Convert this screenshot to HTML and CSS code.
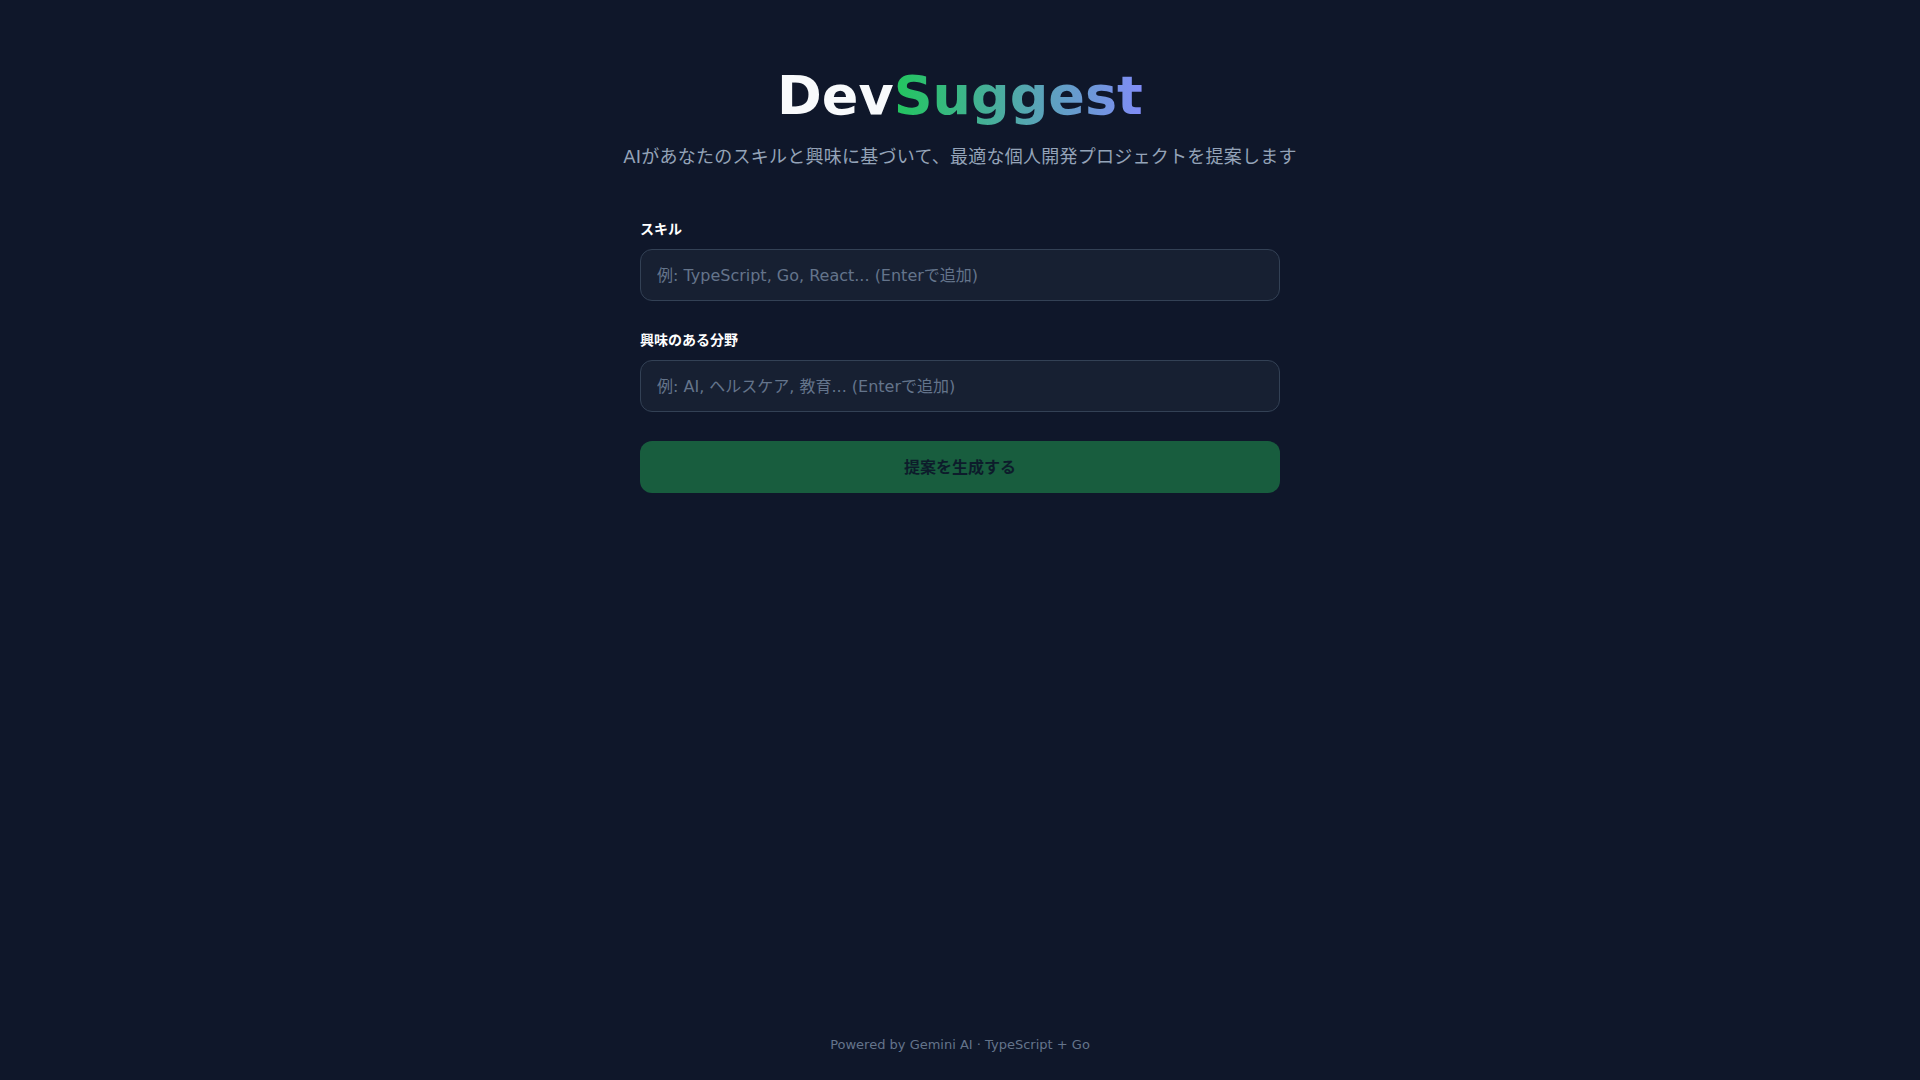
FILE: index.html
```html
<!DOCTYPE html>
<html lang="ja">

<head>
    <meta charset="UTF-8">
    <meta name="viewport" content="width=device-width, initial-scale=1.0">
    <title>DevSuggest</title>
    <link rel="stylesheet" href="styles.css">
</head>

<body>
    <main class="page">
        <header class="hero">
            <h1 class="logo">Dev<span class="logo-accent">Suggest</span></h1>
            <p class="lead">AIがあなたのスキルと興味に基づいて、最適な個人開発プロジェクトを提案します</p>
        </header>

        <form class="panel">
            <div class="field">
                <label for="skills">スキル</label>
                <input type="text" id="skills" placeholder="例: TypeScript, Go, React... (Enterで追加)">
            </div>
            <div class="field">
                <label for="interests">興味のある分野</label>
                <input type="text" id="interests" placeholder="例: AI, ヘルスケア, 教育... (Enterで追加)">
            </div>
            <button type="submit" class="submit" disabled>提案を生成する</button>
        </form>
    </main>

    <footer class="footer">Powered by Gemini AI · TypeScript + Go</footer>
</body>

</html>
```

FILE: styles.css
```css
html,
body {
    margin: 0;
    padding: 0;
}

body {
    background-color: #0f172a;
    color: #f8fafc;
    min-height: 100vh;
    display: flex;
    flex-direction: column;
    font-family: "DejaVu Sans", "Noto Sans CJK JP", sans-serif;
}

.page {
    flex: 1;
    padding-top: 69px;
}

.hero {
    text-align: center;
}

.logo {
    margin: 0 0 20px;
    font-size: 54px;
    line-height: 54px;
    font-weight: 700;
    color: #f8fafc;
}

.logo-accent {
    background-image: linear-gradient(90deg, #22c55e, #818cf8);
    -webkit-background-clip: text;
    background-clip: text;
    color: transparent;
}

.lead {
    margin: 0 0 48px;
    font-size: 18px;
    line-height: 28px;
    letter-spacing: 0.25px;
    color: #94a3b8;
}

.panel {
    width: 640px;
    margin: 0 auto;
    display: flex;
    flex-direction: column;
    gap: 29px;
}

.field label {
    display: block;
    margin-bottom: 10px;
    font-size: 14px;
    line-height: 20px;
    font-weight: 700;
    color: #ffffff;
}

.field input {
    display: block;
    width: 100%;
    height: 52px;
    box-sizing: border-box;
    padding: 0 16px;
    background-color: #172032;
    border: 1px solid #334155;
    border-radius: 12px;
    color: #f1f5f9;
    font-family: inherit;
    font-size: 16px;
    outline: none;
}

.field input::placeholder {
    color: #64748b;
}

.submit {
    width: 100%;
    height: 52px;
    padding: 0 0 2px;
    border: none;
    border-radius: 12px;
    background-color: #185d3e;
    color: #0d1c2b;
    font-family: inherit;
    font-size: 16px;
    font-weight: 700;
    cursor: not-allowed;
}

.footer {
    text-align: center;
    padding-bottom: 27px;
    font-size: 13px;
    line-height: 16px;
    color: #64748b;
}
```
